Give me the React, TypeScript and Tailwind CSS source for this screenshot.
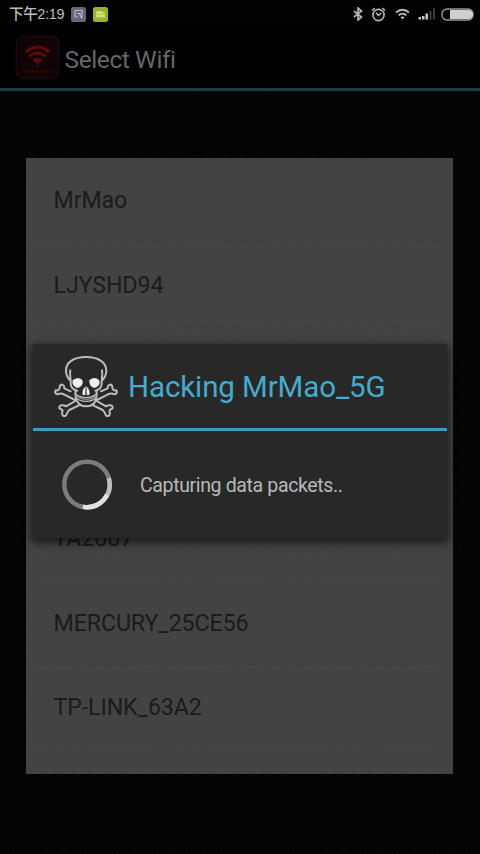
import {memo} from "react";
import clsx from "clsx";

// rows without a name are still being resolved
const networks = ["MrMao", "LJYSHD94", "", "", "TA2007", "MERCURY_25CE56", "TP-LINK_63A2", ""]

const StatusBar = () => (
    <div className="flex h-7 items-center bg-[#020202] pl-[9px] pr-[5px] text-[#bcbcbc]">
        <span className="w-[56px] font-['Liberation_Sans','Noto_Sans_CJK_SC',sans-serif] text-[14.5px] leading-7 tracking-[-0.35px] font-medium whitespace-nowrap">下午2:19</span>
        <svg className="ml-1.5" width="15" height="15" viewBox="0 0 15 15">
            <rect width="15" height="15" rx="2.5" fill="#67677a" />
            <path d="M4 3.5h7v6.5H9.5M4 3.5V10h3M6 6.5h3v1.5l2 3.5" fill="none" stroke="#b9b9c8" strokeWidth="1.2" />
        </svg>
        <svg className="ml-[7px]" width="15" height="15" viewBox="0 0 15 15">
            <rect width="15" height="15" rx="2.5" fill="#9db02c" />
            <path d="M3 4h6.5l2.5 2.5v4H3z" fill="#c3d25c" />
            <path d="M4 5.5h5M3.5 9h8" stroke="#e2eba0" strokeWidth="1" />
        </svg>
        <div className="flex-1" />
        <svg width="10" height="14" viewBox="0 0 10 14" fill="none" stroke="#b4b4b4" strokeWidth="1.7">
            <path d="M1 4l7.5 6L5 13V1l3.5 3L1 10" />
        </svg>
        <svg className="ml-2" width="15" height="15" viewBox="0 0 15 15" fill="none" stroke="#b4b4b4" strokeWidth="1.6">
            <circle cx="7.5" cy="8" r="5.6" />
            <path d="M5 5.8l2.5 2.5L10.3 6M1 3.5L3.7 1M14 3.5L11.3 1" />
        </svg>
        <svg className="ml-[9px]" width="15" height="12" viewBox="0 0 15 12" fill="none" stroke="#b8b8b8" strokeWidth="1.9">
            <path d="M1 4.6c3.8-3.8 9.2-3.8 13 0M3.6 7.4c2.3-2.2 5.5-2.2 7.8 0" />
            <path d="M5.5 9.2c1.2-.9 2.8-.9 4 0l-2 2.3z" fill="#b8b8b8" stroke="none" />
        </svg>
        <svg className="ml-2" width="18" height="12" viewBox="0 0 18 12">
            <path d="M.5 9h2.500v2.500H.5zM4 8h2.500v3.500H4zM7.500 5.500H10v6H7.500z" fill="#c4c4c4" />
            <path d="M11.5 3h2v8.5h-2zM15 .5h2v11h-2z" fill="#3c3c3c" />
        </svg>
        <svg className="ml-[5px]" width="34" height="13" viewBox="0 0 34 13">
            <rect x="1" y="1" width="31" height="11" rx="5" fill="none" stroke="#9a9a9a" strokeWidth="1.4" />
            <path d="M9 2h18.5a4.500 4.500 0 0 1 0 9H9z" fill="#cfcfcf" />
        </svg>
    </div>
)

const ActionBar = () => (
    <div className="flex h-[63px] items-center border-b-[3px] border-[#1c3a48] bg-black pl-[15px]">
        <svg className="-mt-0.5" width="45" height="45" viewBox="0 0 45 45">
            <rect x="1.5" y="1.5" width="42" height="42" rx="7" fill="#120304" stroke="#140a14" strokeWidth="2" />
            <g fill="none" stroke="#5a0c0c" strokeWidth="3.2">
                <path d="M11 17c7-6.5 16-6.5 23 0" />
                <path d="M14.5 21.5c5-4.5 11-4.5 16 0" />
            </g>
            <path d="M17.5 24.5c3-2.5 7-2.5 10 0l-5 5z" fill="#5a0c0c" />
            <path d="M22.5 29v4" stroke="#3a0a0a" strokeWidth="1.5" />
            <path d="M8 36.5h29" stroke="#300708" strokeWidth="2.5" strokeDasharray="3 1" />
        </svg>
        <h1 className="ml-[4.5px] pt-[3px] text-[24.5px] leading-[30px] tracking-[-0.4px] text-[#666]">Select Wifi</h1>
    </div>
)

const SkullIcon = () => (
    <svg className="shrink-0" width="72" height="70" viewBox="0 0 216 210" fill="none" stroke="#bdbdbd" strokeWidth="6" strokeLinejoin="round" strokeLinecap="round">
        {/* crossed bones */}
        <path d="M62 121L43 112C44 101 33 97 29 106C31 114 25 119 17 118C12 127 21 133 29 128C34 126 37 128 42 130L75 147" />
        <path d="M153 121L173 112C172 101 183 97 187 106C185 114 191 119 199 118C204 127 195 133 187 128C182 126 179 128 174 130L141 147" />
        <path d="M76 150L48 166C41 161 26 161 28 171C31 176 37 174 38 180C33 188 39 199 47 194C53 188 51 182 58 177L91 161" />
        <path d="M140 150L168 166C175 161 190 161 188 171C185 176 179 174 178 180C183 188 177 199 169 194C163 188 165 182 158 177L125 161" />
        {/* cranium and jaw */}
        <path d="M59 87C51 78 48 69 48 57C49 32 74 18 108 18C145 18 168 33 169 58C169 71 165 79 158 87" />
        <path d="M61 58C58 72 63 84 62 97C62 109 70 117 82 119M156 58C159 72 154 84 155 97C155 109 147 117 136 119" />
        <path d="M76 120C77 131 75 140 80 148C86 161 98 166 108 166C121 166 133 160 137 148C141 140 139 131 140 120" />
        <path d="M78 130C88 139 97 140 108 140C119 140 129 139 138 130M78 141C88 149 97 151 108 151C119 151 129 149 138 141" strokeWidth="4" />
        <path d="M79 136C90 144 98 145 108 145C119 145 128 144 137 136" strokeWidth="4" stroke="#8e8e8e" />
        <g fill="#f0f0f0" stroke="#f0f0f0" strokeWidth="3">
            <path d="M70 88C78 81 91 82 96 88C99 98 92 110 82 109C72 108 66 98 70 88z" />
            <path d="M120 88C127 81 140 81 146 88C150 98 144 108 134 109C124 110 118 99 120 88z" />
            <path d="M106 107C99 113 97 121 98 131L105 132z" strokeWidth="1" />
            <path d="M110 107C117 113 119 121 118 131L111 132z" strokeWidth="1" />
        </g>
    </svg>
)

const Spinner = () => (
    <svg className="shrink-0" width="52" height="52" viewBox="0 0 52 52" fill="none" strokeWidth="4.5">
        <circle cx="26" cy="25.5" r="22.7" stroke="#7c7c7c" />
        <path d="M22 47.9A22.7 22.7 0 0 0 47.7 19" stroke="#bdbdbd" />
        <path d="M22 47.9A22.7 22.7 0 0 0 46 36" stroke="#e2e2e2" />
    </svg>
)

const HackingDialog = ({ssid, message}: {ssid: string, message: string}) => (
    <div className="absolute left-[33px] top-[344px] h-[194px] w-[414px] rounded-[2px] bg-[#282828] shadow-[0_3px_9px_2px_rgba(0,0,0,0.6)]">
        <div className="flex h-[87px] items-center border-b-[3px] border-[#3a9dbb] pl-[17px]">
            <SkullIcon />
            <h2 className="ml-[6px] pt-[2px] text-[29.5px] leading-9 tracking-[-0.1px] whitespace-nowrap text-[#45abcd]">Hacking {ssid}</h2>
        </div>
        <div className="flex h-[107px] items-center pl-7">
            <Spinner />
            <p className="ml-[27px] pt-[2px] text-[19.5px] leading-6 tracking-[-0.36px] text-[#b8b8b8]">{message}</p>
        </div>
    </div>
)

const NetworkListRaw = () => (
    <ul className="mr-[27px] ml-[26px] mt-[66.5px] h-[616.5px] overflow-hidden bg-[#444] bg-[repeating-linear-gradient(45deg,rgba(0,0,0,0.05)_0_1px,transparent_1px_3px)]">
        {networks.map((name, i) => (
            <li
                key={i}
                className={clsx("flex h-[84.5px] items-center border-b border-[#404040] pl-[27.5px] text-[23.2px] tracking-[-0.1px] text-[#1b1b1b]", i === 0 ? "pt-[2.5px]" : "pt-[3px]")}
            >
                {name}
            </li>
        ))}
    </ul>
)

const NetworkList = memo(NetworkListRaw)

export default function App() {
    return (
        <div className="relative h-[854px] w-[480px] overflow-hidden bg-[#030303] bg-[repeating-linear-gradient(45deg,#070707_0_1px,transparent_1px_3px)] font-['Roboto','Liberation_Sans',sans-serif]">
            <StatusBar />
            <ActionBar />
            <NetworkList />
            <HackingDialog ssid="MrMao_5G" message="Capturing data packets.." />
        </div>
    )
}
